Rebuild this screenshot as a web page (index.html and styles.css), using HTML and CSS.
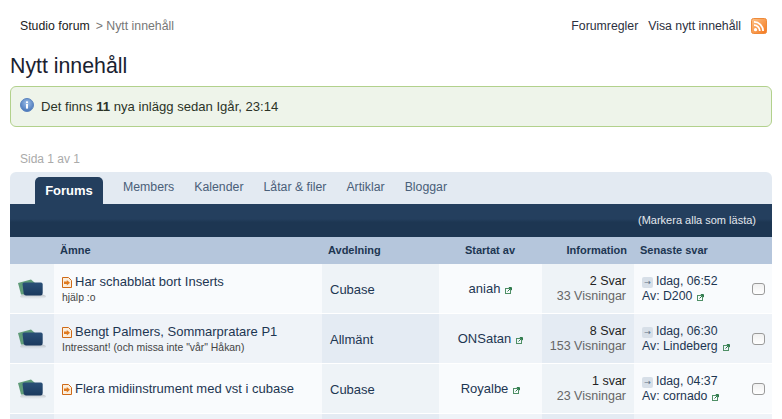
FILE: index.html
```html
<!DOCTYPE html>
<html lang="en">
<head>
    <meta charset="UTF-8">
    <meta name="viewport" content="width=device-width, initial-scale=1.0">
    <title>Nytt innehåll</title>
    <link rel="stylesheet" href="styles.css">
</head>
<body>
    <div class="page">
        <div class="topbar">
            <div class="crumbs"><a href="#">Studio forum</a><span class="crumb-sep">&gt; Nytt innehåll</span></div>
            <div class="toplinks">
                <a href="#">Forumregler</a>
                <a href="#">Visa nytt innehåll</a>
                <svg class="rss" width="16" height="16" viewBox="0 0 16 16">
                    <defs>
                        <linearGradient id="rssfill" x1="0" y1="0" x2="1" y2="1">
                            <stop offset="0" stop-color="#fdc389"/>
                            <stop offset="1" stop-color="#f5771c"/>
                        </linearGradient>
                    </defs>
                    <rect x="0.5" y="0.5" width="15" height="15" rx="2" fill="url(#rssfill)" stroke="#ee8a3a"/>
                    <circle cx="4.5" cy="11.7" r="1.6" fill="#fff"/>
                    <path d="M3 7.2a5.8 5.8 0 0 1 5.8 5.8M3 3.9a9.1 9.1 0 0 1 9.1 9.1" fill="none" stroke="#fff" stroke-width="1.8"/>
                </svg>
            </div>
        </div>

        <h1>Nytt innehåll</h1>

        <div class="notice">
            <svg class="info" width="14" height="14" viewBox="0 0 14 14">
                <defs>
                    <radialGradient id="infofill" cx="0.5" cy="0.35" r="0.7">
                        <stop offset="0" stop-color="#9dbfe8"/>
                        <stop offset="1" stop-color="#3f6fb5"/>
                    </radialGradient>
                </defs>
                <circle cx="7" cy="7" r="6.5" fill="url(#infofill)" stroke="#5b84be"/>
                <rect x="6" y="6" width="2" height="4.6" fill="#fff"/>
                <rect x="6" y="3.4" width="2" height="1.7" fill="#fff"/>
            </svg>
            <span>Det finns <b>11</b> nya inlägg sedan Igår, 23:14</span>
        </div>

        <div class="pages">Sida 1 av 1</div>

        <div class="forum">
            <ul class="tabs">
                <li class="active"><a href="#">Forums</a></li>
                <li><a href="#">Members</a></li>
                <li><a href="#">Kalender</a></li>
                <li><a href="#">Låtar &amp; filer</a></li>
                <li><a href="#">Artiklar</a></li>
                <li><a href="#">Bloggar</a></li>
            </ul>
            <div class="maintitle"><a href="#">(Markera alla som lästa)</a></div>

            <table class="topics">
                <colgroup>
                    <col class="c-icon"><col class="c-subject"><col class="c-forum"><col class="c-starter"><col class="c-info"><col class="c-last">
                </colgroup>
                <thead>
                    <tr>
                        <th></th>
                        <th>Ämne</th>
                        <th>Avdelning</th>
                        <th class="center">Startat av</th>
                        <th class="right">Information</th>
                        <th>Senaste svar</th>
                    </tr>
                </thead>
                <tbody>
                    <tr>
                        <td class="col-icon"><svg class="folder" width="30" height="26" viewBox="0 0 30 26"><use href="#folder-icon"/></svg></td>
                        <td class="col-subject">
                            <div class="title"><svg class="doc" width="10" height="11" viewBox="0 0 10 11"><use href="#doc-icon"/></svg><a href="#">Har schabblat bort Inserts</a></div>
                            <div class="desc">hjälp :o</div>
                        </td>
                        <td class="col-forum"><a href="#">Cubase</a></td>
                        <td class="col-starter"><a href="#">aniah</a><svg class="ext" width="7" height="7" viewBox="0 0 7 7"><use href="#ext-icon"/></svg></td>
                        <td class="col-info"><div>2 Svar</div><div class="views">33 Visningar</div></td>
                        <td class="col-last">
                            <div class="last-wrap">
                                <div>
                                    <div><span class="go">→</span><a href="#">Idag, 06:52</a></div>
                                    <div>Av: <a href="#">D200</a><svg class="ext" width="7" height="7" viewBox="0 0 7 7"><use href="#ext-icon"/></svg></div>
                                </div>
                                <input type="checkbox" class="mark">
                            </div>
                        </td>
                    </tr>
                    <tr class="alt">
                        <td class="col-icon"><svg class="folder" width="30" height="26" viewBox="0 0 30 26"><use href="#folder-icon"/></svg></td>
                        <td class="col-subject">
                            <div class="title"><svg class="doc" width="10" height="11" viewBox="0 0 10 11"><use href="#doc-icon"/></svg><a href="#">Bengt Palmers, Sommarpratare P1</a></div>
                            <div class="desc">Intressant! (och missa inte "vår" Håkan)</div>
                        </td>
                        <td class="col-forum"><a href="#">Allmänt</a></td>
                        <td class="col-starter"><a href="#">ONSatan</a><svg class="ext" width="7" height="7" viewBox="0 0 7 7"><use href="#ext-icon"/></svg></td>
                        <td class="col-info"><div>8 Svar</div><div class="views">153 Visningar</div></td>
                        <td class="col-last">
                            <div class="last-wrap">
                                <div>
                                    <div><span class="go">→</span><a href="#">Idag, 06:30</a></div>
                                    <div>Av: <a href="#">Lindeberg</a><svg class="ext" width="7" height="7" viewBox="0 0 7 7"><use href="#ext-icon"/></svg></div>
                                </div>
                                <input type="checkbox" class="mark">
                            </div>
                        </td>
                    </tr>
                    <tr>
                        <td class="col-icon"><svg class="folder" width="30" height="26" viewBox="0 0 30 26"><use href="#folder-icon"/></svg></td>
                        <td class="col-subject">
                            <div class="title"><svg class="doc" width="10" height="11" viewBox="0 0 10 11"><use href="#doc-icon"/></svg><a href="#">Flera midiinstrument med vst i cubase</a></div>
                        </td>
                        <td class="col-forum"><a href="#">Cubase</a></td>
                        <td class="col-starter"><a href="#">Royalbe</a><svg class="ext" width="7" height="7" viewBox="0 0 7 7"><use href="#ext-icon"/></svg></td>
                        <td class="col-info"><div>1 svar</div><div class="views">23 Visningar</div></td>
                        <td class="col-last">
                            <div class="last-wrap">
                                <div>
                                    <div><span class="go">→</span><a href="#">Idag, 04:37</a></div>
                                    <div>Av: <a href="#">cornado</a><svg class="ext" width="7" height="7" viewBox="0 0 7 7"><use href="#ext-icon"/></svg></div>
                                </div>
                                <input type="checkbox" class="mark">
                            </div>
                        </td>
                    </tr>
                    <tr class="alt cut">
                        <td class="col-icon"></td><td class="col-subject"></td><td class="col-forum"></td><td class="col-starter"></td><td class="col-info"></td><td class="col-last"></td>
                    </tr>
                </tbody>
            </table>
        </div>
    </div>

    <!-- shared icons -->
    <svg class="sprites" width="0" height="0">
        <defs>
            <linearGradient id="shadowfill" x1="0" y1="0" x2="0" y2="1">
                <stop offset="0" stop-color="#7f858a" stop-opacity="0.65"/>
                <stop offset="1" stop-color="#c5c9cc" stop-opacity="0"/>
            </linearGradient>
            <linearGradient id="folderfill" x1="0" y1="0" x2="0" y2="1">
                <stop offset="0" stop-color="#2a5078"/>
                <stop offset="1" stop-color="#1b3a5e"/>
            </linearGradient>
            <symbol id="folder-icon" viewBox="0 0 30 26">
                <ellipse cx="16" cy="20.5" rx="13" ry="3" fill="url(#shadowfill)"/>
                <path d="M1 7 L14 3.5 L18 7 L7 18.5 L4 18.5z" fill="#5f9b78"/>
                <path d="M5.5 8 Q5.5 6.5 7 6.5 L24 6.5 Q25.7 6.5 25.7 8.5 L25.7 17 Q25.7 19.5 23.5 19.5 L9 19.5 Q7 19.5 6.7 17.5z" fill="url(#folderfill)"/>
            </symbol>
            <symbol id="doc-icon" viewBox="0 0 10 11">
                <path d="M0.5 0.5 L6.5 0.5 L9.5 3.5 L9.5 10.5 L0.5 10.5z" fill="#fbeedd" stroke="#cf6a17"/>
                <path d="M2 4.5 L4.8 4.5 L4.8 3 L8 5.8 L4.8 8.5 L4.8 7 L2 7z" fill="#e07a1f"/>
            </symbol>
            <symbol id="ext-icon" viewBox="0 0 7 7">
                <rect x="0.5" y="1.5" width="5" height="5" fill="none" stroke="#4f8f66"/>
                <path d="M2.5 4.5 L6 1 M3.8 0.5 L6.5 0.5 L6.5 3.2" fill="none" stroke="#2f7a4c"/>
            </symbol>
        </defs>
    </svg>
</body>
</html>
```

FILE: styles.css
```css
html, body {
    height: 419px;
    overflow: hidden;
}
body {
    font-family: "Liberation Sans", Arial, sans-serif;
    font-size: 13px;
    color: #1d3652;
    margin: 0;
    padding: 0;
    background-color: #fff;
}
a {
    color: inherit;
    text-decoration: none;
}
.page {
    padding: 0 10px;
    width: 762px;
}
.topbar {
    display: flex;
    justify-content: space-between;
    align-items: center;
    height: 16px;
    padding-top: 18px;
    font-size: 12.3px;
}
.crumbs {
    padding-left: 10px;
    color: #222;
}
.crumb-sep {
    color: #777;
    margin-left: 6px;
}
.toplinks {
    display: flex;
    align-items: center;
    color: #2c3040;
}
.toplinks a {
    margin-right: 10px;
}
.rss {
    margin-right: 5px;
}
h1 {
    font-size: 21.3px;
    font-weight: normal;
    color: #1a2230;
    margin: 0;
    line-height: 24px;
    padding-top: 20px;
}
.notice {
    display: flex;
    align-items: center;
    height: 39px;
    margin-top: 8px;
    padding-left: 9px;
    background-color: #eef4ea;
    border: 1px solid #b2d18c;
    border-radius: 6px;
    color: #2b3327;
    font-size: 13.1px;
}
.info {
    margin: 0 7px 3px 0;
}
.pages {
    color: #aaa;
    font-size: 12px;
    line-height: 14px;
    padding: 25px 0 0 10px;
}
.forum {
    margin-top: 6px;
    border-radius: 6px 6px 0 0;
    overflow: hidden;
}
.tabs {
    display: flex;
    list-style: none;
    margin: 0;
    padding: 5px 0 0 25px;
    height: 27px;
    background-color: #e3eaf2;
    color: #4a6079;
    font-size: 12.3px;
}
.tabs li {
    margin-right: 20px;
    line-height: 21px;
}
.tabs .active {
    width: 68px;
    text-align: center;
    line-height: 28px;
    font-size: 13px;
    font-weight: bold;
    color: #fff;
    background-color: #243f5e;
    border-radius: 5px 5px 0 0;
}
.maintitle {
    height: 33px;
    line-height: 32px;
    text-align: right;
    padding-right: 16px;
    font-size: 11px;
    color: #e3e8ee;
    background: linear-gradient(#243f5e 0, #243f5e 45%, #1d3652 55%, #1d3652 100%);
}
.topics {
    width: 762px;
    table-layout: fixed;
    border-collapse: collapse;
}
.c-icon { width: 44px; }
.c-subject { width: 268px; }
.c-forum { width: 117px; }
.c-starter { width: 103px; }
.c-info { width: 92px; }
.c-last { width: 138px; }
.topics th {
    height: 25px;
    padding: 0 7px 2px 6px;
    text-align: left;
    font-size: 11px;
    color: #1d3652;
    background-color: #b5c6dc;
}
.topics th.center {
    text-align: center;
}
.topics th.right {
    text-align: right;
}
.topics td {
    height: 49px;
    padding: 0;
    border-bottom: 1px solid #fff;
    vertical-align: middle;
}
.col-icon {
    background-color: #eef3f7;
    text-align: center;
}
.topics .col-subject {
    background-color: #f9fbfd;
    padding-left: 8px;
}
.topics .col-forum {
    height: 47px;
    background-color: #eef3f7;
    padding: 2px 0 0 8px;
}
.col-starter {
    background-color: #f9fbfd;
    text-align: center;
}
.topics .col-info {
    background-color: #eef3f7;
    text-align: right;
    padding-right: 8px;
    line-height: 15px;
    color: #222;
    font-size: 12.5px;
}
.topics .col-last {
    background-color: #f9fbfd;
    padding-left: 8px;
    font-size: 12.3px;
    line-height: 15px;
}
.topics .alt .col-icon, .topics .alt .col-forum, .topics .alt .col-info {
    background-color: #e4ebf3;
}
.topics .alt .col-subject, .topics .alt .col-starter, .topics .alt .col-last {
    background-color: #eff3f8;
}
.topics .cut td {
    height: 6px;
    padding: 0;
    border-bottom: 0;
}
.folder {
    display: block;
    margin-left: 7px;
}
.title {
    line-height: 17px;
}
.doc {
    vertical-align: -2px;
    margin-right: 3px;
}
.desc {
    font-size: 10.4px;
    line-height: 14px;
    color: #444;
    margin-top: 1px;
}
.ext {
    margin-left: 5px;
    vertical-align: -1px;
}
.views {
    color: #666;
}
.go {
    display: inline-block;
    width: 11px;
    height: 11px;
    line-height: 11px;
    margin-right: 3px;
    font-family: "DejaVu Sans", sans-serif;
    font-size: 8px;
    text-align: center;
    color: #5c6f82;
    background-color: #d7dfe8;
    border-radius: 2px;
}
.last-wrap {
    display: flex;
    justify-content: space-between;
    align-items: center;
    padding-right: 7px;
}
.mark {
    appearance: none;
    width: 13px;
    height: 12px;
    margin: 1px 0 0;
    background: linear-gradient(#f0f0f0, #fff);
    border: 1px solid #9a9a9a;
    border-radius: 3px;
}
.sprites {
    position: absolute;
}
```
